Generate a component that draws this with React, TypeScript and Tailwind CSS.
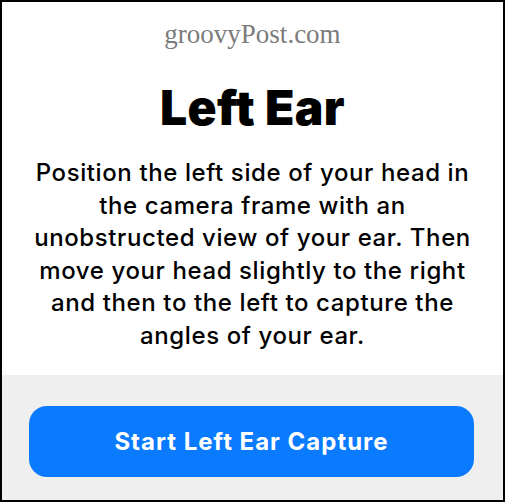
const lines = [
  "Position the left side of your head in",
  "the camera frame with an",
  "unobstructed view of your ear. Then",
  "move your head slightly to the right",
  "and then to the left to capture the",
  "angles of your ear.",
];

export default function App() {
  return (
    <div className="flex h-[502px] w-[505px] flex-col overflow-hidden border-2 border-black bg-white font-['Inter','Liberation_Sans',sans-serif] text-black">
      <div className="flex flex-1 flex-col items-center">
        <p className="mt-[16px] font-['Liberation_Serif',serif] text-[27px] leading-[32px] text-[#7b7b7b]">
          groovyPost.com
        </p>
        <h1 className="mt-[34px] text-[48px] font-black leading-none tracking-[0.4px]">
          Left Ear
        </h1>
        <p className="mt-[25px] text-center text-[24px] font-medium leading-[32.6px] tracking-[0.6px]">
          {lines.map((line, i) => (
            <span key={i} className="block whitespace-nowrap">
              {line}
            </span>
          ))}
        </p>
      </div>
      <div className="h-[125px] bg-[#efeff0] pt-[31px]">
        <button className="ml-[27px] h-[71px] w-[445px] rounded-[18px] bg-[#0a7aff] text-[24px] font-bold tracking-[1px] text-white">
          Start Left Ear Capture
        </button>
      </div>
    </div>
  );
}
